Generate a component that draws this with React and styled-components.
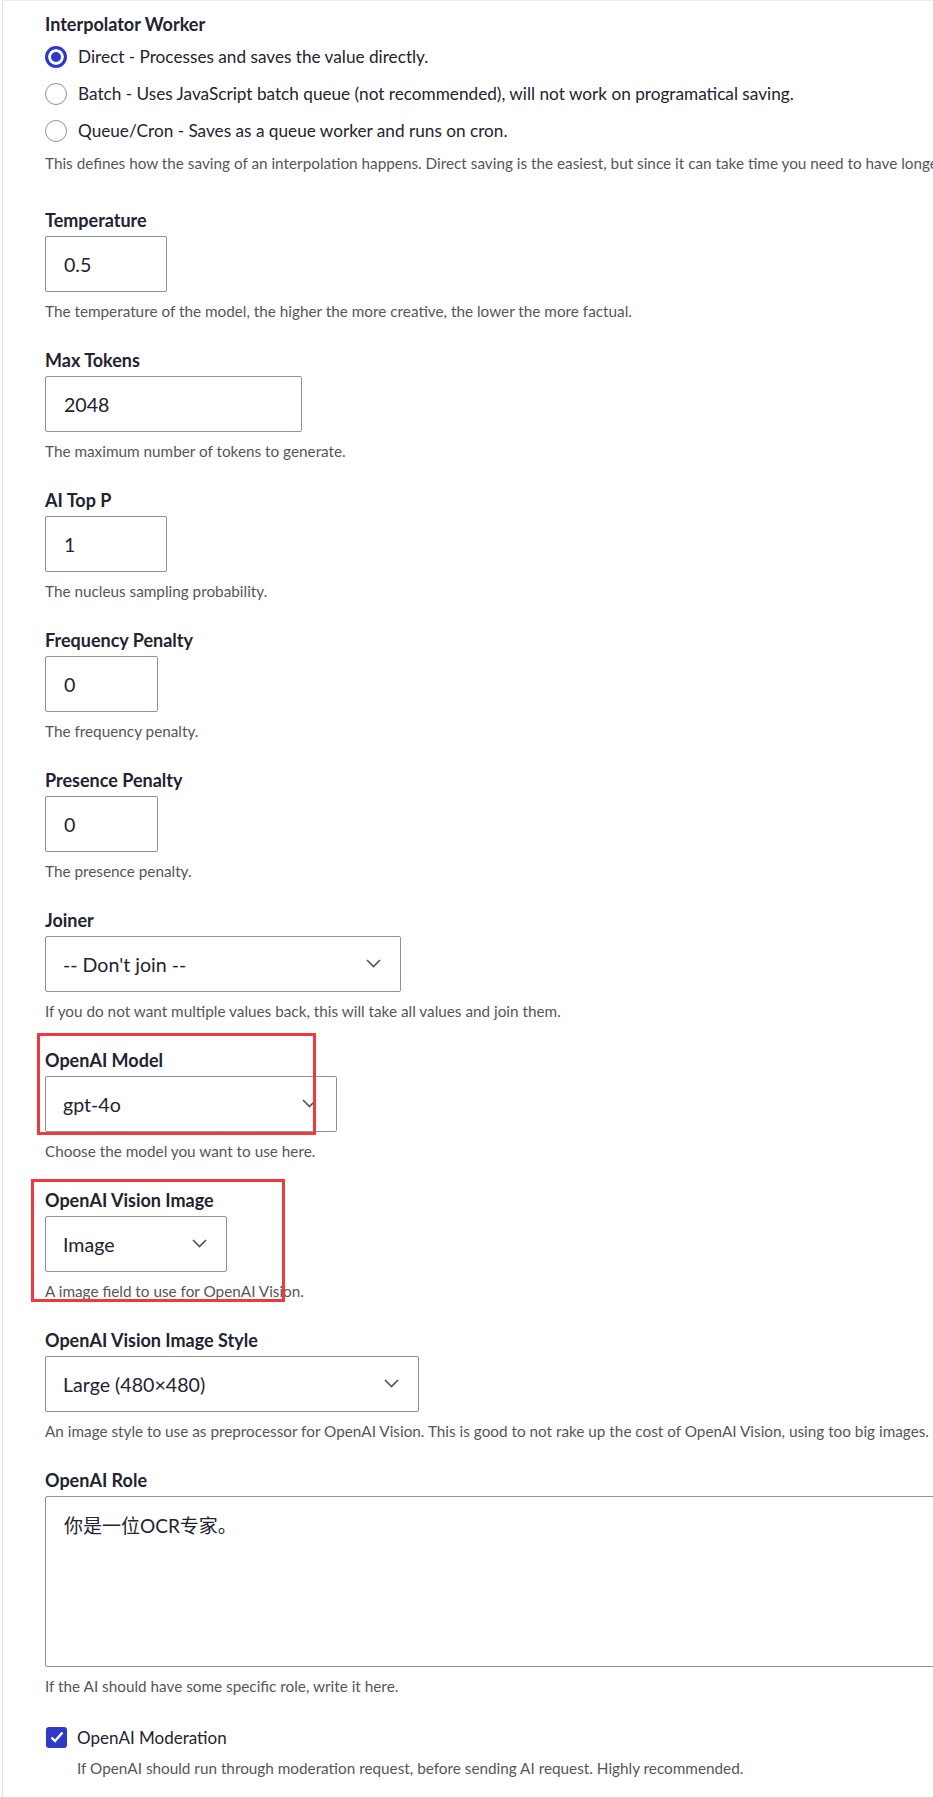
import styled, { createGlobalStyle } from "styled-components";

const GlobalStyle = createGlobalStyle`
  html,
  body {
    margin: 0;
    padding: 0;
    background: #fff;
    overflow: hidden;
  }

  body {
    font-family: Lato, "Noto Sans", "Noto Sans CJK SC", sans-serif;
    color: #222330;
  }
`;

const Page = styled.form`
  box-sizing: border-box;
  width: 1200px;
  min-height: 1797px;
  margin-left: 2px;
  padding: 13px 0 0 42px;
  border-left: 1px solid #e2e2e4;
  border-top: 1px solid #ededef;
`;

const Fieldset = styled.fieldset`
  margin: 0 0 38px;
  padding: 0;
  border: 0;
`;

const Legend = styled.legend`
  padding: 0;
  margin-bottom: 4px;
  font-size: 18px;
  font-weight: 700;
  line-height: 20px;
  color: #222330;
`;

const Field = styled.div`
  position: relative;
  margin-bottom: 30px;
`;

const Label = styled.label`
  display: block;
  margin-bottom: 6px;
  font-size: 18px;
  font-weight: 700;
  line-height: 20px;
  color: #222330;
`;

const Help = styled.div`
  margin-top: ${(p) => p.$top ?? 10}px;
  padding-left: ${(p) => p.$indent ?? 0}px;
  font-size: 15.3px;
  line-height: 18px;
  color: #55565b;
  white-space: nowrap;
`;

const OptionRow = styled.label`
  display: flex;
  align-items: center;
  gap: 11px;
  height: 37px;
  font-size: 17.2px;
  color: #222330;
  white-space: nowrap;
`;

const Radio = styled.input.attrs({ type: "radio" })`
  appearance: none;
  box-sizing: border-box;
  flex: none;
  width: 22px;
  height: 22px;
  margin: 0;
  border-radius: 50%;
  border: 1px solid #8e929c;
  background: #fff;

  &:checked {
    border: 3px solid #2f39c8;
    background: #2f39c8;
    box-shadow: inset 0 0 0 3px #fff;
  }
`;

const TextInput = styled.input`
  box-sizing: border-box;
  display: block;
  width: ${(p) => p.$w}px;
  height: 56px;
  margin: 0;
  padding: 0 18px;
  border: 1px solid #8e929c;
  border-radius: 2px;
  font-family: inherit;
  font-size: 19.6px;
  color: #222330;
  background: #fff;
`;

const SelectWrap = styled.div`
  position: relative;
  width: ${(p) => p.$w}px;
`;

const Select = styled.select`
  box-sizing: border-box;
  display: block;
  appearance: none;
  width: 100%;
  height: 56px;
  margin: 0;
  padding: 0 40px 0 17px;
  border: 1px solid #8e929c;
  border-radius: 2px;
  font-family: inherit;
  font-size: 19.6px;
  color: #222330;
  background: #fff;
`;

const Chevron = styled.svg`
  position: absolute;
  top: 50%;
  right: 20px;
  width: 15px;
  height: 9px;
  margin-top: -5px;
  pointer-events: none;
`;

const TextArea = styled.textarea`
  box-sizing: border-box;
  display: block;
  width: 1050px;
  height: 171px;
  margin: 0;
  padding: 16px 18px;
  border: 1px solid #8e929c;
  border-radius: 2px;
  resize: none;
  font-family: Lato, "Noto Sans CJK SC", sans-serif;
  font-size: 19px;
  line-height: 26px;
  color: #222330;
`;

const CheckRow = styled.label`
  display: flex;
  align-items: center;
  gap: 10px;
  height: 24px;
  margin-top: 8px;
  padding-left: 1px;
  font-size: 17px;
  color: #222330;
`;

const CheckBox = styled.span`
  display: flex;
  align-items: center;
  justify-content: center;
  width: 21px;
  height: 21px;
  border-radius: 3px;
  background: #2f39c8;
`;

// hand-drawn red frame over a field
const Marker = styled.div`
  position: absolute;
  left: ${(p) => p.$x}px;
  top: ${(p) => p.$y}px;
  width: ${(p) => p.$w}px;
  height: ${(p) => p.$h}px;
  box-sizing: border-box;
  border: 3px solid #ef3a3d;
  pointer-events: none;
`;

const ChevronDown = () => (
  <Chevron viewBox="0 0 15 9">
    <polyline
      points="1,1 7.5,7.5 14,1"
      fill="none"
      stroke="#545560"
      strokeWidth="1.7"
    />
  </Chevron>
);

const SelectField = ({ label, value, width, help, children }) => (
  <Field>
    <Label>{label}</Label>
    <SelectWrap $w={width}>
      <Select defaultValue={value}>
        <option value={value}>{value}</option>
      </Select>
      <ChevronDown />
    </SelectWrap>
    <Help>{help}</Help>
    {children}
  </Field>
);

const InputField = ({ label, value, width, help }) => (
  <Field>
    <Label>{label}</Label>
    <TextInput $w={width} defaultValue={value} />
    <Help>{help}</Help>
  </Field>
);

const workers = [
  "Direct - Processes and saves the value directly.",
  "Batch - Uses JavaScript batch queue (not recommended), will not work on programatical saving.",
  "Queue/Cron - Saves as a queue worker and runs on cron.",
];

const App = () => (
  <>
    <GlobalStyle />
    <Page>
      <Fieldset>
        <Legend>Interpolator Worker</Legend>
        {workers.map((w, i) => (
          <OptionRow key={w}>
            <Radio name="worker" defaultChecked={i === 0} />
            {w}
          </OptionRow>
        ))}
        <Help $top={5}>
          This defines how the saving of an interpolation happens. Direct saving is the
          easiest, but since it can take time you need to have longer timeouts.
        </Help>
      </Fieldset>

      <InputField
        label="Temperature"
        value="0.5"
        width={122}
        help="The temperature of the model, the higher the more creative, the lower the more factual."
      />
      <InputField
        label="Max Tokens"
        value="2048"
        width={257}
        help="The maximum number of tokens to generate."
      />
      <InputField
        label="AI Top P"
        value="1"
        width={122}
        help="The nucleus sampling probability."
      />
      <InputField
        label="Frequency Penalty"
        value="0"
        width={113}
        help="The frequency penalty."
      />
      <InputField
        label="Presence Penalty"
        value="0"
        width={113}
        help="The presence penalty."
      />

      <SelectField
        label="Joiner"
        value="-- Don't join --"
        width={356}
        help="If you do not want multiple values back, this will take all values and join them."
      />
      <SelectField
        label="OpenAI Model"
        value="gpt-4o"
        width={292}
        help="Choose the model you want to use here."
      >
        <Marker $x={-8} $y={-17} $w={279} $h={102} />
      </SelectField>
      <SelectField
        label="OpenAI Vision Image"
        value="Image"
        width={182}
        help="A image field to use for OpenAI Vision."
      >
        <Marker $x={-14} $y={-11} $w={254} $h={123} />
      </SelectField>
      <SelectField
        label="OpenAI Vision Image Style"
        value="Large (480×480)"
        width={374}
        help="An image style to use as preprocessor for OpenAI Vision. This is good to not rake up the cost of OpenAI Vision, using too big images."
      />

      <Field>
        <Label>OpenAI Role</Label>
        <TextArea defaultValue="你是一位OCR专家。" />
        <Help>If the AI should have some specific role, write it here.</Help>
      </Field>

      <Field>
        <CheckRow>
          <CheckBox>
            <svg width="14" height="12" viewBox="0 0 14 12">
              <polyline
                points="1.5,6.5 5,10 12.5,1.5"
                fill="none"
                stroke="#fff"
                strokeWidth="2.4"
              />
            </svg>
          </CheckBox>
          OpenAI Moderation
        </CheckRow>
        <Help $top={10} $indent={32}>
          If OpenAI should run through moderation request, before sending AI request. Highly
          recommended.
        </Help>
      </Field>
    </Page>
  </>
);

export default App;
